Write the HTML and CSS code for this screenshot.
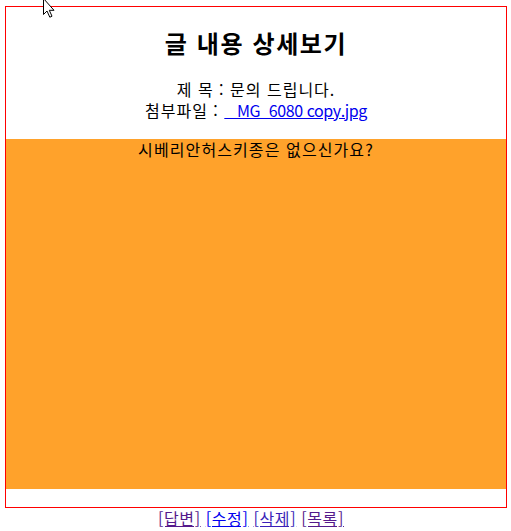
FILE: index.html
```html
<!DOCTYPE html>
<html lang="ko">
<head>
<meta charset="utf-8">
<title>글 내용 상세보기</title>
<link rel="stylesheet" href="styles.css">
</head>
<body>
<div class="page">
  <div class="board">
    <h2 class="title">글 내용 상세보기</h2>
    <p class="meta">제 목 : 문의 드립니다.<br>첨부파일 : <a class="file" href="#">&nbsp;_MG_6080 copy.jpg</a></p>
    <div class="content">시베리안허스키종은 없으신가요?</div>
  </div>
  <div class="actions"><a class="visited" href="#">[답변]</a> <a class="fresh" href="#">[수정]</a> <a class="mixed" href="#">[삭제]</a> <a class="visited" href="#">[목록]</a></div>
</div>
<svg class="cursor" width="13" height="20" viewBox="0 0 13 20"><path d="M0.5 -1.5 L0.5 14.5 L4 11 L6.8 17.2 L9 16.2 L6.3 10.3 L11 10.3 Z" fill="#fff" stroke="#000" stroke-width="1" stroke-linejoin="miter"/></svg>
</body>
</html>
```
FILE: styles.css
```css
html, body {
  margin: 0;
  padding: 0;
  background: #fff;
}
body {
  font-family: "Noto Sans CJK KR", "Noto Sans", sans-serif;
  font-size: 16px;
  line-height: 21px;
  color: #000;
}
.page {
  padding: 6px 0 0 5px;
  width: 502px;
}
.board {
  width: 500px;
  height: 500px;
  border: 1px solid #ff0000;
  text-align: center;
}
.title {
  margin: 0;
  padding-top: 20px;
  height: 32px;
  line-height: 32px;
  font-size: 24px;
  font-weight: bold;
  letter-spacing: 1.6px;
}
.meta {
  margin: 20px 0 0;
  height: 60px;
  letter-spacing: 1px;
}
.file {
  color: #0000ee;
  letter-spacing: -0.4px;
}
.content {
  height: 350px;
  background: #ffa22b;
  letter-spacing: 1.1px;
}
.actions {
  text-align: center;
  width: 492px;
  letter-spacing: 0.6px;
}
.actions a.visited {
  color: #551a8b;
}
.actions a.fresh {
  color: #0000ee;
}
.actions a.mixed {
  color: #3a1fb8;
}
.cursor {
  position: absolute;
  left: 43px;
  top: 0;
}
```
